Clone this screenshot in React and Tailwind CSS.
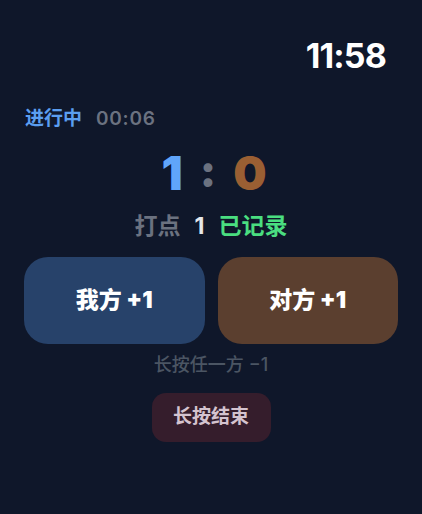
import React, { useState } from 'react';

const font = { fontFamily: 'Inter, "Noto Sans CJK SC", sans-serif' };

export default function App() {
  const [mine, setMine] = useState(1);
  const [theirs, setTheirs] = useState(0);

  return (
    <div style={font} className="w-[422px] h-[514px] bg-[#0f172a] flex flex-col overflow-hidden">
      {/* CLOCK */}
      <div className="pt-[36px] pr-[36px] text-right text-[34px] leading-[40px] font-bold text-white tracking-tight">
        11:58
      </div>

      {/* STATUS */}
      <div className="mt-[31px] pl-[25px] flex items-center gap-[14px] text-[19px] leading-[24px]">
        <span className="font-bold text-[#5b9ef0]">进行中</span>
        <span className="font-semibold text-[#6b7280] tracking-[0.04em]">00:06</span>
      </div>

      {/* SCORE */}
      <div className="mt-[18px] flex items-center justify-center gap-[17px] text-[47px] leading-[48px] font-black">
        <span className="text-[#60a5fa] pl-[6px]">{mine}</span>
        <span className="text-[#6b7280] text-[44px] -mt-[4px]">:</span>
        <span className="text-[#9a5f33]">{theirs}</span>
      </div>

      <div className="mt-[15px] flex items-center justify-center gap-[14px] text-[23px] leading-[28px] font-bold">
        <span className="text-[#6b7280]">打点</span>
        <span className="text-[#e5e7eb]">1</span>
        <span className="text-[#4ade80]">已记录</span>
      </div>

      {/* BUTTONS */}
      <div className="mt-[17px] px-[24px] grid grid-cols-2 gap-[13px]">
        <button
          onClick={() => setMine(mine + 1)}
          className="h-[87px] rounded-[24px] bg-[#27426a] text-white text-[23px] font-black"
        >
          我方 +1
        </button>
        <button
          onClick={() => setTheirs(theirs + 1)}
          className="h-[87px] rounded-[24px] bg-[#5b3f2f] text-white text-[23px] font-black"
        >
          对方 +1
        </button>
      </div>

      <div className="mt-[10px] text-center text-[18px] leading-[22px] text-[#4b5563] font-medium">
        长按任一方 −1
      </div>

      <div className="mt-[17px] flex justify-center">
        <button className="w-[119px] h-[49px] rounded-[14px] bg-[#351d2c] text-[#d4c3cf] text-[19px] font-semibold">
          长按结束
        </button>
      </div>
    </div>
  );
}
